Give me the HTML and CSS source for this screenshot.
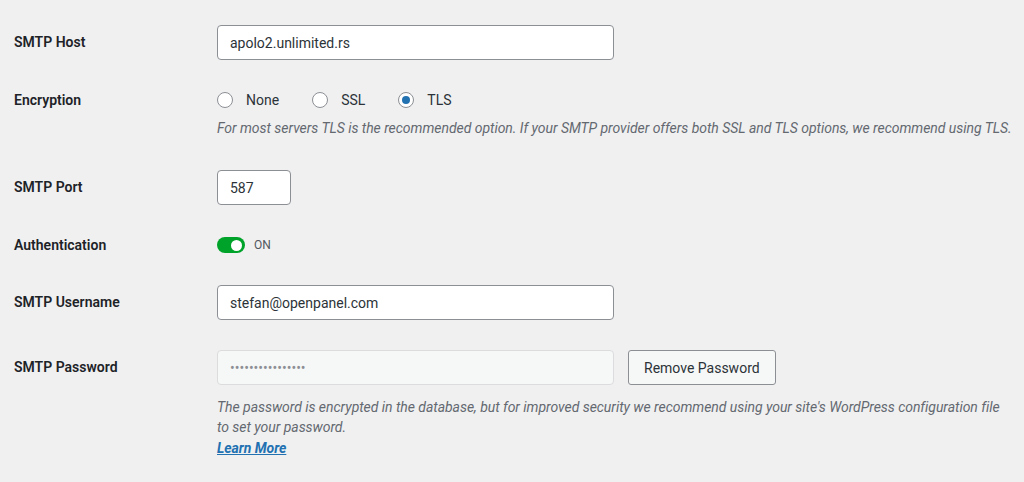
FILE: index.html
```html
<!DOCTYPE html>
<html lang="en">
<head>
<meta charset="utf-8">
<title>SMTP Settings</title>
<link rel="stylesheet" href="styles.css">
</head>
<body>
<form class="form">
  <div class="row">
    <label class="label" for="host">SMTP Host</label>
    <div class="field">
      <input class="text wide" id="host" type="text" value="apolo2.unlimited.rs">
    </div>
  </div>

  <div class="row row-enc">
    <div class="label label-line">Encryption</div>
    <div class="field">
      <div class="radios">
        <label class="radio"><span class="circle"></span>None</label>
        <label class="radio"><span class="circle"></span>SSL</label>
        <label class="radio"><span class="circle checked"></span>TLS</label>
      </div>
      <p class="desc desc-enc">For most servers TLS is the recommended option. If your SMTP provider offers both SSL and TLS options, we recommend using TLS.</p>
    </div>
  </div>

  <div class="row">
    <label class="label" for="port">SMTP Port</label>
    <div class="field">
      <input class="text small" id="port" type="text" value="587">
    </div>
  </div>

  <div class="row">
    <div class="label label-line">Authentication</div>
    <div class="field">
      <div class="toggle-line">
        <span class="toggle"><span class="knob"></span></span>
        <span class="toggle-text">ON</span>
      </div>
    </div>
  </div>

  <div class="row">
    <label class="label" for="user">SMTP Username</label>
    <div class="field">
      <input class="text wide" id="user" type="text" value="stefan@openpanel.com">
    </div>
  </div>

  <div class="row">
    <label class="label" for="pass">SMTP Password</label>
    <div class="field">
      <div class="pass-line">
        <input class="text wide disabled" id="pass" type="password" value="abcdefghijklmnop" disabled>
        <button class="button" type="button">Remove Password</button>
      </div>
      <p class="desc desc-pass">The password is encrypted in the database, but for improved security we recommend using your site's WordPress configuration file to set your password.<br><a class="learn" href="#">Learn More</a></p>
    </div>
  </div>
</form>
</body>
</html>
```

FILE: styles.css
```css
html, body {
  margin: 0;
  padding: 0;
  background: #f0f0f1;
}

body {
  font-family: Roboto, "Liberation Sans", sans-serif;
  font-size: 14px;
  color: #1d2327;
}

.form {
  padding: 25px 0 0 14px;
  display: flex;
  flex-direction: column;
  gap: 30px;
}

.row {
  display: grid;
  grid-template-columns: 203px 1fr;
  align-items: start;
}

.label {
  font-weight: 600;
  line-height: 20px;
  padding-top: 7px;
  color: #1d2327;
}

.label-line {
  padding-top: 0;
}

.field {
  min-width: 0;
}

.text {
  box-sizing: border-box;
  height: 35px;
  border: 1px solid #8c8f94;
  border-radius: 4px;
  background: #fff;
  padding: 0 12px;
  font-family: inherit;
  font-size: 14px;
  color: #2c3338;
  display: block;
  margin: 0;
}

.wide {
  width: 397px;
}

.small {
  width: 74px;
}

.disabled {
  background: #f6f7f7;
  border-color: #dcdcde;
  color: #8c8f94;
  font-size: 14px;
}

.radios {
  display: flex;
  align-items: center;
  height: 20px;
}

.radio {
  display: inline-flex;
  align-items: center;
  gap: 13px;
  margin-right: 33px;
  line-height: 20px;
  color: #2c3338;
}

.circle {
  box-sizing: border-box;
  width: 16px;
  height: 16px;
  border: 1px solid #8c8f94;
  border-radius: 50%;
  background: #fff;
  display: inline-flex;
  align-items: center;
  justify-content: center;
}

.checked::after {
  content: "";
  width: 8px;
  height: 8px;
  border-radius: 50%;
  background: #2271b1;
}

.desc {
  margin: 0;
  font-style: italic;
  color: #646970;
  line-height: 20px;
  letter-spacing: -0.04px;
}

.desc-enc {
  margin-top: 8px;
  margin-bottom: 2px;
}

.desc-pass {
  margin-top: 12px;
  max-width: 790px;
}

.learn {
  display: inline-block;
  margin-top: 1px;
  color: #2271b1;
  font-weight: 700;
  text-decoration: underline;
}

.toggle-line {
  display: flex;
  align-items: center;
  height: 20px;
  gap: 9px;
}

.toggle {
  box-sizing: border-box;
  width: 28px;
  height: 16px;
  border-radius: 8px;
  background: #00a32a;
  display: flex;
  align-items: center;
  justify-content: flex-end;
  padding-right: 3px;
}

.knob {
  width: 11px;
  height: 11px;
  border-radius: 50%;
  background: #fff;
}

.toggle-text {
  font-size: 12px;
  color: #50575e;
  line-height: 20px;
}

.pass-line {
  display: flex;
  align-items: center;
  gap: 14px;
}

.button {
  box-sizing: border-box;
  height: 35px;
  padding: 0 15px;
  border: 1px solid #8c8f94;
  border-radius: 3px;
  background: #f6f7f7;
  color: #2c3338;
  font-family: inherit;
  font-size: 14px;
  margin: 0;
}
```
